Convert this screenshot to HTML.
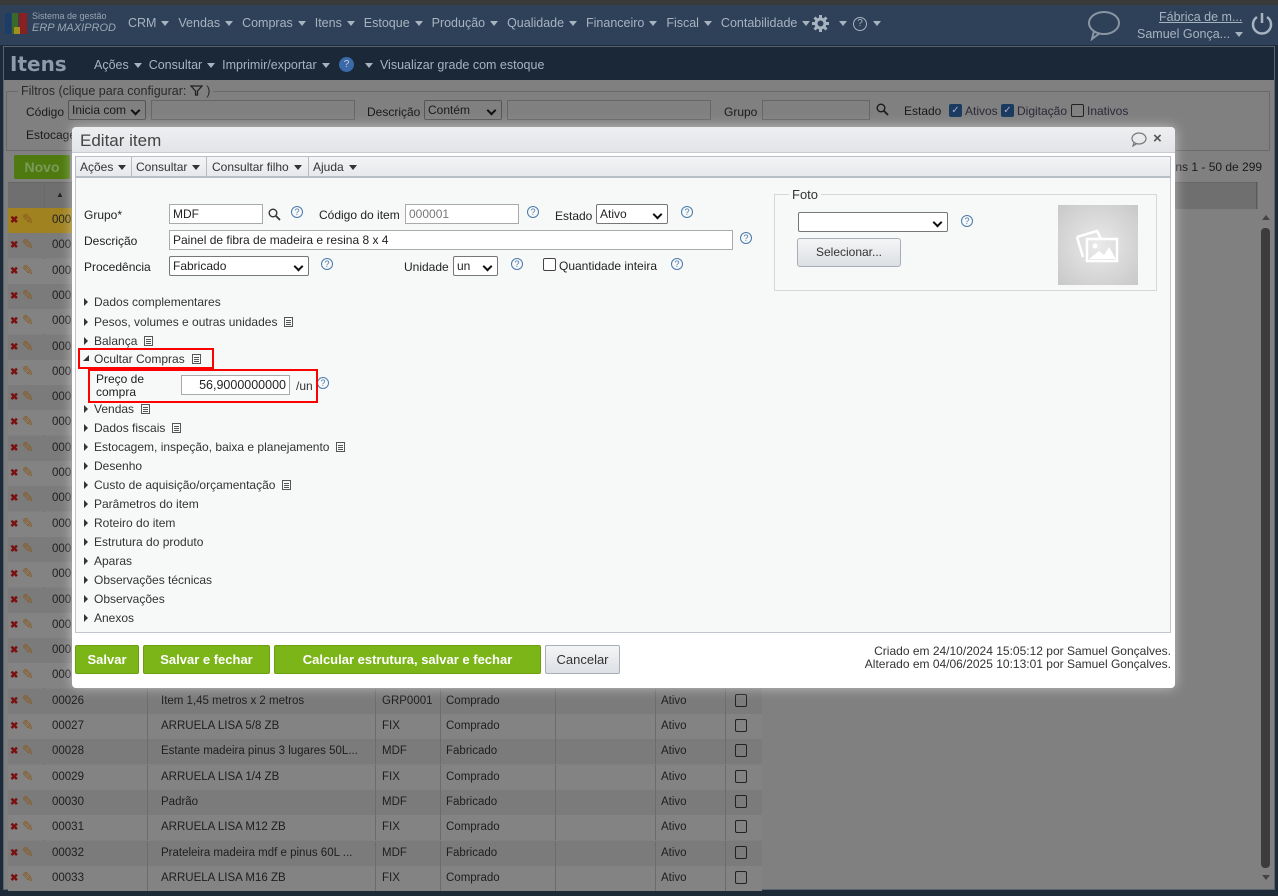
<!DOCTYPE html>
<html><head><meta charset="utf-8"><style>
*{box-sizing:border-box;margin:0;padding:0}
body{width:1278px;height:896px;overflow:hidden;background:#1d2a38;font-family:"Liberation Sans",sans-serif;font-size:12px;position:relative;color:#222}
.a{position:absolute;white-space:nowrap}
.nav{color:#a8b3c0;font-size:12.5px}
.tri{display:inline-block;width:0;height:0;border-left:4px solid transparent;border-right:4px solid transparent;border-top:5px solid currentColor;vertical-align:middle;margin-left:5px}
.row{position:absolute;left:8px;width:754px;height:25px;font-size:11.5px;color:#1e1e1e}
.row span{position:absolute;top:6px}
.inp{position:absolute;background:#fff;border:1px solid #999;height:20px;font-size:12px;padding:2px 3px}
.sel{position:absolute;background:#fff;border:1px solid #777;border-radius:2px;height:20px;font-size:12px;padding:2px 3px}
.sel:after{content:"";position:absolute;right:6px;top:6px;width:5px;height:5px;border-right:2px solid #111;border-bottom:2px solid #111;transform:rotate(45deg)}
.hp{position:absolute;width:12px;height:12px;border:1px solid #4a7aaa;border-radius:50%;color:#4a7aaa;font-size:9px;line-height:10px;text-align:center}
.sec{position:absolute;left:84px;font-size:12px;color:#333}
.sec:before{content:"";position:absolute;left:0;top:3px;border-top:4px solid transparent;border-bottom:4px solid transparent;border-left:4px solid #333}
.sec b{font-weight:normal;margin-left:10px}
.doc{display:inline-block;width:9px;height:10px;border:1px solid #555;margin-left:7px;vertical-align:-1px;background:linear-gradient(#555,#555) 1px 2px/5px 1px no-repeat,linear-gradient(#555,#555) 1px 4px/5px 1px no-repeat,linear-gradient(#555,#555) 1px 6px/5px 1px no-repeat}
.gbtn{position:absolute;top:645px;height:29px;background:#7cb518;border:1px solid #6a9e10;border-radius:2px;color:#fff;font-weight:bold;font-size:13px;line-height:27px;text-align:center;white-space:nowrap}
.lbl{position:absolute;font-size:12px;color:#222;white-space:nowrap}
</style></head><body>
<div class="a" style="left:0;top:0;width:1278px;height:5px;background:#3a3a3a"></div>
<div class="a" style="left:0;top:5px;width:1278px;height:40px;background:#2e4159"></div>
<div class="a" style="left:5px;top:13px;width:6px;height:21px;background:#1c3d6a"></div>
<div class="a" style="left:12px;top:13px;width:6px;height:21px;background:#3a6a2a"></div>
<div class="a" style="left:19px;top:13px;width:8px;height:21px;background:#8a2020"></div>
<div class="a" style="left:14px;top:27px;width:6px;height:7px;background:#a09020"></div>
<div class="a" style="left:32px;top:11px;font-size:9px;color:#9aa5b2">Sistema de gestão</div>
<div class="a" style="left:32px;top:22px;font-size:11px;color:#9aa5b2;font-style:italic">ERP MAXIPROD</div>
<div class="a nav" style="left:128px;top:16px;word-spacing:1px">CRM<span class="tri"></span>&nbsp;&nbsp;Vendas<span class="tri"></span>&nbsp;&nbsp;Compras<span class="tri"></span>&nbsp;&nbsp;Itens<span class="tri"></span>&nbsp;&nbsp;Estoque<span class="tri"></span>&nbsp;&nbsp;Produção<span class="tri"></span>&nbsp;&nbsp;Qualidade<span class="tri"></span>&nbsp;&nbsp;Financeiro<span class="tri"></span>&nbsp;&nbsp;Fiscal<span class="tri"></span>&nbsp;&nbsp;Contabilidade<span class="tri"></span></div>
<svg class="a" style="left:812px;top:15px" width="17" height="17"><circle cx="8.5" cy="8.5" r="4.5" fill="none" stroke="#a8b3c0" stroke-width="3"/><g stroke="#a8b3c0" stroke-width="3"><path d="M8.5 0V4M8.5 13V17M0 8.5H4M13 8.5H17M2.5 2.5L5 5M12 12L14.5 14.5M2.5 14.5L5 12M12 5L14.5 2.5"/></g></svg>
<div class="a nav" style="left:834px;top:16px"><span class="tri"></span></div>
<div class="a" style="left:853px;top:17px;width:14px;height:14px;border:1.5px solid #a8b3c0;border-radius:50%;color:#a8b3c0;font-size:10px;text-align:center;line-height:11px">?</div>
<div class="a nav" style="left:868px;top:16px"><span class="tri"></span></div>
<svg class="a" style="left:1086px;top:9px" width="36" height="32"><ellipse cx="18" cy="14" rx="15" ry="11" fill="none" stroke="#8a96a4" stroke-width="2"/><path d="M8 22 L6 30 L14 24" fill="none" stroke="#8a96a4" stroke-width="2"/></svg>
<div class="a nav" style="left:1159px;top:10px;text-decoration:underline">Fábrica de m...</div>
<div class="a nav" style="left:1137px;top:27px">Samuel Gonça...<span class="tri"></span></div>
<svg class="a" style="left:1250px;top:11px" width="24" height="26"><path d="M7 6 A9 9 0 1 0 17 6" fill="none" stroke="#a8b3c0" stroke-width="2.5"/><path d="M12 2 V12" stroke="#a8b3c0" stroke-width="2.5"/></svg>
<div class="a" style="left:3px;top:46px;width:1272px;height:844px;background:#808080;border:1px solid #5a6470"></div>
<div class="a" style="left:4px;top:47px;width:1270px;height:33px;background:#1a2838"></div>
<div class="a" style="left:10px;top:52px;font-size:20px;font-weight:bold;color:#8e9aa8;font-family:'DejaVu Sans',sans-serif">Itens</div>
<div class="a nav" style="left:94px;top:58px">Ações<span class="tri"></span>&nbsp; Consultar<span class="tri"></span>&nbsp; Imprimir/exportar<span class="tri"></span></div>
<div class="a" style="left:339px;top:57px;width:15px;height:15px;border-radius:50%;background:#3a6aa8;color:#ccd;font-size:10px;text-align:center;line-height:15px">?</div>
<div class="a nav" style="left:360px;top:58px"><span class="tri"></span>&nbsp; Visualizar grade com estoque</div>
<div class="a" style="left:6px;top:91px;width:1264px;height:60px;border:1px solid #6a6a6a"></div>
<div class="a" style="left:18px;top:84px;background:#808080;color:#2a2a2a;font-size:12.5px;padding:0 3px">Filtros (clique para configurar: <svg width="13" height="11" style="vertical-align:-1px"><path d="M1 1H12L7.5 6V10H5.5V6Z" fill="none" stroke="#222" stroke-width="1.3"/></svg> )</div>
<div class="lbl" style="left:26px;top:105px;color:#1a1a1a">Código</div>
<div class="sel" style="left:68px;top:100px;width:78px;background:#808080;border-color:#555;color:#1a1a1a">Inicia com</div>
<div class="inp" style="left:151px;top:100px;width:204px;background:#808080;border-color:#666"></div>
<div class="lbl" style="left:367px;top:105px;color:#1a1a1a">Descrição</div>
<div class="sel" style="left:424px;top:100px;width:78px;background:#808080;border-color:#555;color:#1a1a1a">Contém</div>
<div class="inp" style="left:507px;top:100px;width:204px;background:#808080;border-color:#666"></div>
<div class="lbl" style="left:724px;top:105px;color:#1a1a1a">Grupo</div>
<div class="inp" style="left:762px;top:100px;width:108px;background:#808080;border-color:#666"></div>
<svg class="a" style="left:876px;top:103px" width="13" height="13"><circle cx="5" cy="5" r="3.8" fill="none" stroke="#1a1a1a" stroke-width="1.4"/><path d="M8 8L12 12" stroke="#1a1a1a" stroke-width="1.8"/></svg>
<div class="lbl" style="left:904px;top:104px;color:#1a1a1a">Estado</div>
<div class="a" style="left:949px;top:104px;width:13px;height:13px;background:#1a3a60;border-radius:2px;color:#aac;font-size:10px;line-height:13px;text-align:center">✓</div>
<div class="lbl" style="left:965px;top:104px;color:#2a2a3a">Ativos</div>
<div class="a" style="left:1001px;top:104px;width:13px;height:13px;background:#1a3a60;border-radius:2px;color:#aac;font-size:10px;line-height:13px;text-align:center">✓</div>
<div class="lbl" style="left:1017px;top:104px;color:#2a2a3a">Digitação</div>
<div class="a" style="left:1071px;top:104px;width:13px;height:13px;border:1px solid #222;border-radius:2px"></div>
<div class="lbl" style="left:1087px;top:104px;color:#2a2a3a">Inativos</div>
<div class="lbl" style="left:26px;top:128px;color:#1a1a1a">Estocagem</div>
<div class="a" style="left:14px;top:155px;width:56px;height:24px;background:#4f7a0f;border-radius:2px;color:#7a9a5a;font-weight:bold;font-size:14px;line-height:24px;text-align:center">Novo</div>
<div class="lbl" style="left:1162px;top:160px;color:#1a1a1a">Itens 1 - 50 de 299</div>
<div class="a" style="left:8px;top:182px;width:1250px;height:27px;background:#6f6f6f;border-top:1px solid #666"></div>
<div class="a" style="left:44px;top:182px;width:1px;height:704px;background:#6a6a6a"></div>
<div class="a" style="left:1256px;top:182px;width:1px;height:27px;background:#5a5a5a"></div>
<div class="a" style="left:56px;top:190px;color:#222;font-size:8px">▲</div>
<div class="a" style="left:8px;top:208px;width:754px;height:26px;background:#a08220"></div>
<div id="rows"></div>
<div class="a" style="left:1262px;top:215px;border-left:4px solid transparent;border-right:4px solid transparent;border-bottom:5px solid #444"></div>
<div class="a" style="left:1261px;top:228px;width:9px;height:640px;background:#3c3c3c;border-radius:4px"></div>
<div class="a" style="left:1262px;top:875px;border-left:4px solid transparent;border-right:4px solid transparent;border-top:5px solid #444"></div>
<script>
var d=[["00026","Item 1,45 metros x 2 metros","GRP0001","Comprado"],["00027","ARRUELA LISA 5/8 ZB","FIX","Comprado"],["00028","Estante madeira pinus 3 lugares 50L...","MDF","Fabricado"],["00029","ARRUELA LISA 1/4 ZB","FIX","Comprado"],["00030","Padrão","MDF","Fabricado"],["00031","ARRUELA LISA M12 ZB","FIX","Comprado"],["00032","Prateleira madeira mdf e pinus 60L ...","MDF","Fabricado"],["00033","ARRUELA LISA M16 ZB","FIX","Comprado"]];
var h="";
for(var i=0;i<27;i++){var t=208+i*25.3;var r=i>=19?d[i-19]:["000","","",""];
var bg=i==0?"transparent":(i%2?"#7b7b7b":"#838383");
h+='<div class="row" style="top:'+t+'px;background:'+bg+'"><span style="left:2px;color:#7a1010;font-weight:bold;font-size:10px;top:7px">✖</span><span style="left:14px;color:#8a5a20;font-size:14px;top:3px">✎</span><span style="left:44px">'+r[0]+'</span><span style="left:153px">'+r[1]+'</span><span style="left:374px">'+r[2]+'</span><span style="left:438px">'+r[3]+'</span><span style="left:653px">Ativo</span><span style="left:727px;width:12px;height:13px;border:1px solid #222;border-radius:2px;top:5px"></span>'+
'<i style="position:absolute;left:139px;top:0;width:1px;height:25px;background:#6c6c6c"></i><i style="position:absolute;left:367px;top:0;width:1px;height:25px;background:#6c6c6c"></i><i style="position:absolute;left:432px;top:0;width:1px;height:25px;background:#6c6c6c"></i><i style="position:absolute;left:547px;top:0;width:1px;height:25px;background:#6c6c6c"></i><i style="position:absolute;left:647px;top:0;width:1px;height:25px;background:#6c6c6c"></i><i style="position:absolute;left:717px;top:0;width:1px;height:25px;background:#6c6c6c"></i></div>';}
document.getElementById("rows").innerHTML=h;
</script>
<div class="a" style="left:72px;top:127px;width:1103px;height:561px;background:#fff;border-radius:4px;box-shadow:0 0 12px rgba(255,255,255,.5)"></div>
<div class="a" style="left:72px;top:127px;width:1103px;height:26px;background:linear-gradient(#eeeff1,#e2e4e7);border-radius:4px 4px 0 0;border-bottom:1px solid #c8ccd2"></div>
<div class="a" style="left:80px;top:131px;font-size:17px;color:#444">Editar item</div>
<svg class="a" style="left:1131px;top:132px" width="16" height="15"><ellipse cx="8" cy="6.5" rx="7" ry="5.5" fill="none" stroke="#777" stroke-width="1.2"/><path d="M3 11 L2 14 L6 11.5" fill="none" stroke="#777" stroke-width="1.2"/></svg>
<div class="a" style="left:1153px;top:130px;font-size:15px;font-weight:bold;color:#555">×</div>
<div class="a" style="left:75px;top:156px;width:1096px;height:22px;background:linear-gradient(#f4f5f6,#e6e8eb);border:1px solid #b8bec6;border-bottom:2px solid #b8bec6"></div>
<div class="a" style="left:80px;top:160px;color:#333">Ações<span class="tri"></span></div>
<div class="a" style="left:131px;top:157px;width:1px;height:20px;background:#bbb"></div>
<div class="a" style="left:136px;top:160px;color:#333">Consultar<span class="tri"></span></div>
<div class="a" style="left:206px;top:157px;width:1px;height:20px;background:#bbb"></div>
<div class="a" style="left:212px;top:160px;color:#333">Consultar filho<span class="tri"></span></div>
<div class="a" style="left:308px;top:157px;width:1px;height:20px;background:#bbb"></div>
<div class="a" style="left:313px;top:160px;color:#333">Ajuda<span class="tri"></span></div>
<div class="a" style="left:75px;top:178px;width:1096px;height:455px;background:#f7f8f8;border:1px solid #c0c6cc;border-top:none"></div>
<div class="lbl" style="left:84px;top:208px">Grupo*</div>
<div class="inp" style="left:169px;top:204px;width:94px;border-color:#aaa">MDF</div>
<svg class="a" style="left:268px;top:208px" width="13" height="13"><circle cx="5" cy="5" r="3.8" fill="none" stroke="#333" stroke-width="1.4"/><path d="M8 8L12 12" stroke="#333" stroke-width="1.8"/></svg>
<div class="hp" style="left:291px;top:206px">?</div>
<div class="lbl" style="left:319px;top:208px">Código do item</div>
<div class="inp" style="left:405px;top:204px;width:114px;border-color:#aaa;color:#777">000001</div>
<div class="hp" style="left:527px;top:206px">?</div>
<div class="lbl" style="left:555px;top:209px">Estado</div>
<div class="sel" style="left:596px;top:204px;width:72px">Ativo</div>
<div class="hp" style="left:681px;top:206px">?</div>
<div class="lbl" style="left:84px;top:234px">Descrição</div>
<div class="inp" style="left:169px;top:230px;width:564px;border-color:#aaa">Painel de fibra de madeira e resina 8 x 4</div>
<div class="hp" style="left:740px;top:232px">?</div>
<div class="lbl" style="left:84px;top:260px">Procedência</div>
<div class="sel" style="left:169px;top:256px;width:140px">Fabricado</div>
<div class="hp" style="left:321px;top:258px">?</div>
<div class="lbl" style="left:404px;top:260px">Unidade</div>
<div class="sel" style="left:453px;top:256px;width:45px">un</div>
<div class="hp" style="left:511px;top:258px">?</div>
<div class="a" style="left:543px;top:258px;width:13px;height:13px;border:1px solid #444;border-radius:2px;background:#fff"></div>
<div class="lbl" style="left:559px;top:259px">Quantidade inteira</div>
<div class="hp" style="left:671px;top:258px">?</div>
<div class="a" style="left:774px;top:194px;width:383px;height:97px;border:1px solid #d4d8dc"></div>
<div class="a" style="left:789px;top:187px;background:#f7f8f8;padding:0 3px;font-size:13px;color:#333">Foto</div>
<div class="sel" style="left:798px;top:212px;width:150px"></div>
<div class="hp" style="left:961px;top:215px">?</div>
<div class="a" style="left:797px;top:238px;width:104px;height:29px;background:linear-gradient(#f4f5f6,#dcdfe3);border:1px solid #a8aeb5;border-radius:3px;text-align:center;line-height:27px;color:#333">Selecionar...</div>
<div class="a" style="left:1058px;top:205px;width:80px;height:80px;background:radial-gradient(#eaeaea,#c8c8c8)"></div>
<svg class="a" style="left:1074px;top:225px" width="48" height="40"><path d="M3 12 L23 6 L27 14" fill="none" stroke="#fff" stroke-width="2.5"/><path d="M3 12 L9 32" fill="none" stroke="#fff" stroke-width="2.5"/><rect x="13" y="14" width="30" height="22" fill="none" stroke="#fff" stroke-width="2.5"/><circle cx="21" cy="21" r="2.5" fill="#fff"/><path d="M15 34 L25 26 L30 30 L35 22 L42 34 Z" fill="#fff"/></svg>
<div class="sec" style="top:295px"><b>Dados complementares</b></div>
<div class="sec" style="top:315px"><b>Pesos, volumes e outras unidades</b><span class="doc"></span></div>
<div class="sec" style="top:334px"><b>Balança</b><span class="doc"></span></div>
<div class="a" style="left:84px;top:352px;font-size:12px;color:#333"><b style="font-weight:normal;margin-left:10px">Ocultar Compras</b><span class="doc"></span></div>
<svg class="a" style="left:83px;top:355px" width="7" height="7"><path d="M6 0V6H0Z" fill="#333"/></svg>
<div class="a" style="left:78px;top:348px;width:136px;height:21px;border:2px solid #f00"></div>
<div class="lbl" style="left:96px;top:373px;line-height:13px">Preço de<br>compra</div>
<div class="inp" style="left:181px;top:375px;width:109px;border-color:#aaa;text-align:right;font-size:12.5px">56,9000000000</div>
<div class="lbl" style="left:296px;top:379px;color:#333">/un</div>
<div class="hp" style="left:317px;top:377px">?</div>
<div class="a" style="left:88px;top:369px;width:230px;height:34px;border:2px solid #f00"></div>
<div class="sec" style="top:402px"><b>Vendas</b><span class="doc"></span></div>
<div class="sec" style="top:421px"><b>Dados fiscais</b><span class="doc"></span></div>
<div class="sec" style="top:440px"><b>Estocagem, inspeção, baixa e planejamento</b><span class="doc"></span></div>
<div class="sec" style="top:459px"><b>Desenho</b></div>
<div class="sec" style="top:478px"><b>Custo de aquisição/orçamentação</b><span class="doc"></span></div>
<div class="sec" style="top:497px"><b>Parâmetros do item</b></div>
<div class="sec" style="top:516px"><b>Roteiro do item</b></div>
<div class="sec" style="top:535px"><b>Estrutura do produto</b></div>
<div class="sec" style="top:554px"><b>Aparas</b></div>
<div class="sec" style="top:573px"><b>Observações técnicas</b></div>
<div class="sec" style="top:592px"><b>Observações</b></div>
<div class="sec" style="top:611px"><b>Anexos</b></div>
<div class="gbtn" style="left:75px;width:64px">Salvar</div>
<div class="gbtn" style="left:143px;width:127px">Salvar e fechar</div>
<div class="gbtn" style="left:274px;width:267px">Calcular estrutura, salvar e fechar</div>
<div class="a" style="left:545px;top:645px;width:75px;height:29px;background:linear-gradient(#f4f5f6,#dde0e4);border:1px solid #a8aeb5;border-radius:2px;text-align:center;line-height:27px;font-size:13px;color:#333">Cancelar</div>
<div class="a" style="left:780px;top:645px;width:391px;text-align:right;font-size:12px;color:#333;line-height:13px">Criado em 24/10/2024 15:05:12 por Samuel Gonçalves.<br>Alterado em 04/06/2025 10:13:01 por Samuel Gonçalves.</div>
</body></html>
